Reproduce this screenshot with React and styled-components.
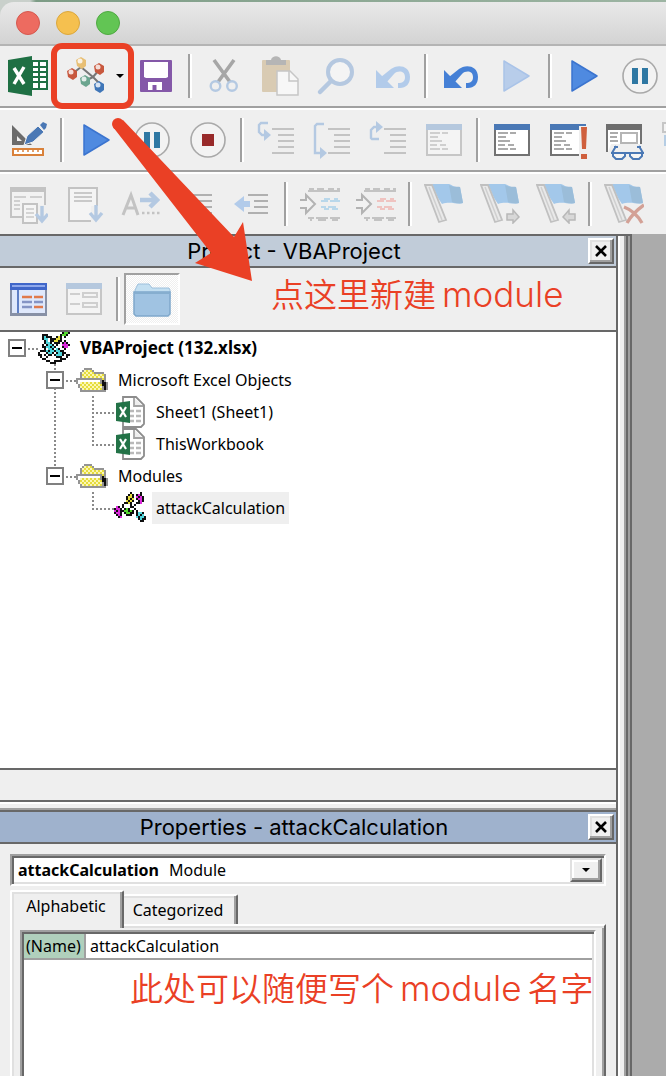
import React from "react";
import styled, { createGlobalStyle, css } from "styled-components";

const face = "#efefef";
const dark = "#686868";
const mid = "#a0a0a0";
const soft = "#e0e0e0";
const red = "#ea4025";

const GlobalStyle = createGlobalStyle`
  *, *::before, *::after { box-sizing: border-box; }
  body { margin: 0; font-family: "Noto Sans", "Noto Sans CJK SC", sans-serif; font-size: 16px; color: #000; }
  button, select { font: inherit; color: inherit; }
  ul { list-style: none; margin: 0; padding: 0; }
`;

const Window = styled.div`
  position: relative;
  display: flex;
  flex-direction: column;
  min-height: 100vh;
  overflow: hidden;
  background: ${face};
`;
const Desktop = styled.div`
  padding-top: 2px;
  background: linear-gradient(90deg, #c9d0cb 0, #c9d0cb 30px, #7d9c86 36px, #9db5a3 100%);
`;
const TitleBar = styled.header`
  display: flex;
  align-items: center;
  gap: 16px;
  height: 44px;
  padding: 0 16px;
  border-radius: 14px 0 0 0;
  border-bottom: 2px solid #b4b4b4;
  background: linear-gradient(#e9e9e9, #d3d3d3);
`;
const Light = styled.button`
  width: 24px;
  height: 24px;
  padding: 0;
  border-radius: 50%;
  border: 1px solid ${(p) => p.$edge};
  background: ${(p) => p.$fill};
`;
const Toolbar = styled.div`
  display: flex;
  align-items: center;
  height: ${(p) => (p.$last ? 60 : 64)}px;
  overflow: hidden;
  ${(p) => !p.$last && css`
    border-bottom: 2px solid #fff;
    box-shadow: inset 0 -2px ${mid};
    padding-bottom: 2px;
  `}
`;
const ToolButton = styled.button`
  flex: none;
  display: flex;
  align-items: center;
  justify-content: ${(p) => (p.$menu ? "space-between" : "center")};
  width: ${(p) => (p.$menu ? 72 : 56)}px;
  height: 52px;
  padding: ${(p) => (p.$menu ? "0 4px 0 10px" : "0")};
  border: 0;
  background: none;
  ${(p) => p.$pressed && css`
    border: 2px solid #fff;
    border-top-color: ${mid};
    border-left-color: ${mid};
    background: repeating-conic-gradient(#fff 0 25%, #efefef 0 50%) 0 0 / 2px 2px;
  `}
`;
const Divider = styled.span`
  flex: none;
  width: 4px;
  height: 44px;
  margin: 0 4px;
  border-left: 2px solid ${mid};
  border-right: 2px solid #fff;
`;
const Caret = styled.span`
  border: 4px solid transparent;
  border-top-color: #000;
  border-bottom: 0;
`;

const Workspace = styled.div`
  flex: 1;
  display: flex;
`;
const Dock = styled.div`
  flex: 1;
  min-width: 0;
  display: flex;
  flex-direction: column;
  border-top: 2px solid ${dark};
  border-right: 2px solid ${dark};
`;
const Splitter = styled.div`
  width: 14px;
  border-top: 2px solid ${dark};
  background: linear-gradient(90deg, #fff 2px, ${face} 2px 6px, ${mid} 6px 8px, ${dark} 8px 10px, ${mid} 10px 12px, ${dark} 12px);
`;
const CodeArea = styled.main`
  width: 34px;
  background: #ababab;
`;
const PanelTitle = styled.div`
  display: flex;
  align-items: center;
  height: 32px;
  padding-right: 2px;
  border-bottom: 2px solid ${dark};
  background: ${(p) => (p.$active ? "#9fb2cd" : "#c1ccd9")};
`;
const PanelHeading = styled.h2`
  flex: 1;
  margin: 0;
  text-align: center;
  font: 400 22px/28px Inter, sans-serif;
`;
const CloseButton = styled.button`
  display: flex;
  align-items: center;
  justify-content: center;
  width: 26px;
  height: 26px;
  padding: 0;
  border: 2px solid ${dark};
  border-top-color: #fff;
  border-left-color: #fff;
  background: ${face};
  box-shadow: inset -2px -2px ${mid}, inset 2px 2px ${soft};
`;
const PanelTools = styled.div`
  display: flex;
  align-items: center;
  height: 64px;
  padding-bottom: 2px;
  box-shadow: inset 0 -2px ${dark};
`;
const Tree = styled.ul`
  min-height: 436px;
  background: #fff;
`;
const PanelFoot = styled.div`
  height: 42px;
  border-top: 2px solid ${dark};
  background: linear-gradient(${face} 30px, ${dark} 30px 32px, #fff 32px 34px, ${face} 34px 38px, ${mid} 38px);
`;
const TreeRow = styled.div`
  display: flex;
  align-items: center;
  height: 32px;
  padding-left: 8px;
`;
const dotsV = "repeating-linear-gradient(#8a8a8a 0 2px, transparent 2px 4px)";
const dotsH = "repeating-linear-gradient(90deg, #8a8a8a 0 2px, transparent 2px 4px)";
const Guide = styled.span`
  width: ${(p) => (p.$end ? 30 : 38)}px;
  height: 32px;
  display: flex;
  align-items: center;
  background-repeat: no-repeat;
  background-image: ${dotsV}, ${dotsH};
  background-position: 8px 0, 8px 16px;
  background-size: ${(p) => (p.$v ? `2px ${p.$v}px` : "0 0")}, ${(p) => (p.$h ? "22px 2px" : "0 0")};
`;
const Toggle = styled.button`
  width: 18px;
  height: 18px;
  padding: 0 2px;
  border: 2px solid #808080;
  background: #fff;
  display: flex;
  align-items: center;
  &::before { content: ""; flex: 1; height: 2px; background: #000; }
`;
const TreeLabel = styled.span`
  margin-left: 6px;
  padding: 0 4px;
  line-height: 32px;
  white-space: nowrap;
  font-weight: ${(p) => (p.$bold ? 700 : 400)};
  font-size: ${(p) => (p.$bold ? 17 : 16)}px;
  background: ${(p) => (p.$selected ? face : "none")};
`;

const Properties = styled.section`
  flex: 1;
  display: flex;
  flex-direction: column;
  border-top: 2px solid ${dark};
`;
const PropertiesBody = styled.div`
  flex: 1;
  display: flex;
  flex-direction: column;
  padding: 10px 10px 0;
`;
const Combo = styled.div`
  display: flex;
  align-items: center;
  height: 32px;
  padding: 2px;
  border: 2px solid #fff;
  border-top-color: ${mid};
  border-left-color: ${mid};
  background: #fff;
  box-shadow: inset 2px 2px ${dark}, inset -2px -2px ${soft};
`;
const ComboLabel = styled.label`
  padding: 0 6px 0 4px;
  font-weight: 700;
`;
const ComboSelect = styled.select`
  flex: 1;
  height: 24px;
  padding: 0 4px;
  border: 0;
  appearance: none;
  background: none;
`;
const ComboArrow = styled.span`
  display: flex;
  align-items: center;
  justify-content: center;
  width: 32px;
  height: 24px;
  border: 2px solid ${dark};
  border-top-color: ${soft};
  border-left-color: ${soft};
  background: ${face};
  box-shadow: inset -2px -2px ${mid}, inset 2px 2px #fff;
`;
const TabStrip = styled.div`
  display: flex;
  align-items: flex-end;
  height: 34px;
  margin-top: 4px;
`;
const Tab = styled.button`
  position: relative;
  z-index: ${(p) => (p.$active ? 1 : 0)};
  width: 114px;
  height: ${(p) => (p.$active ? 38 : 30)}px;
  margin-bottom: ${(p) => (p.$active ? -4 : 0)}px;
  padding: 0 ${(p) => (p.$active ? 2 : 4)}px ${(p) => (p.$active ? 8 : 0)}px 0;
  border: 0 solid #fff;
  border-top-width: 2px;
  border-left-width: ${(p) => (p.$active ? 2 : 0)}px;
  border-right: 2px solid ${dark};
  border-radius: 2px 2px 0 0;
  background: ${face};
  box-shadow: inset -2px 0 ${mid}, inset ${(p) => (p.$active ? 2 : 0)}px 2px ${soft};
`;
const TabPage = styled.div`
  flex: 1;
  display: flex;
  padding: 4px 8px 0;
  border: 2px solid #fff;
  border-right-color: ${dark};
  border-bottom: 0;
  box-shadow: inset 2px 2px ${soft}, inset -2px 0 ${mid};
`;
const Sheet = styled.div`
  flex: 1;
  padding: 2px 2px 0;
  border: 2px solid ${mid};
  border-right-color: #fff;
  border-bottom: 0;
  background: #fff;
  box-shadow: inset 2px 2px ${dark}, inset -2px 0 ${soft};
`;
const PropTable = styled.table`
  width: 100%;
  border-spacing: 0;
  th, td { height: 26px; padding: 0 2px; line-height: 24px; text-align: left; font-weight: 400; border-bottom: 2px solid ${mid}; }
  th { width: 62px; background: #b0d0bc; border-right: 2px solid ${mid}; white-space: nowrap; }
  td { padding: 0 4px; }
`;

const Overlay = styled.svg`
  position: absolute;
  left: 0;
  top: 0;
  pointer-events: none;
`;
const Note = styled.p`
  position: absolute;
  left: ${(p) => p.$x}px;
  top: ${(p) => p.$y}px;
  display: flex;
  align-items: baseline;
  gap: 6px;
  margin: 0;
  color: ${red};
  white-space: nowrap;
  line-height: 48px;
  font-size: 33px;
  font-weight: 350;
  font-family: "Noto Sans CJK SC", sans-serif;
`;
const NoteLatin = styled.span`
  font: 300 35px/48px Inter, sans-serif;
`;

const Icon = ({ children, w = 40, h = 40 }) => (
  <svg width={w} height={h} viewBox={`0 0 ${w} ${h}`} fill="none" aria-hidden="true">{children}</svg>
);

const ExcelMark = () => (
  <Icon>
    <path d="M23 4H40V34H23Z" fill="#1f7044" />
    <path d="M25 6H38V32H25Z" fill="#fff" />
    <path d="M31 5V33M25 11H38M25 16H38M25 21H38M25 26H38" stroke="#1f7044" strokeWidth="2" />
    <path d="M0 4L24 0V40L0 36Z" fill="#1f7044" />
    <path d="M6 12L16 28M16 11L6 28" stroke="#fff" strokeWidth="3.4" />
  </Icon>
);
const Ball = ({ x, y, c }) => (
  <g>
    <path d={`M${x - 5} ${y - 3}L${x} ${y - 6}L${x + 5} ${y - 3}V${y + 3}L${x + 1} ${y + 6}L${x - 4} ${y + 3}Z`} fill={c} />
    <ellipse cx={x - 1} cy={y - 2} rx="2.5" ry="2.5" fill="#fff" opacity=".8" />
  </g>
);
const ModuleMark = () => (
  <Icon>
    <path d="M6 18L15 11L27 21L33 14M19 25L27 21L34 28" stroke="#777" strokeWidth="2" />
    <Ball x={15} y={7} c="#e8bf74" />
    <Ball x={6} y={18} c="#c8583e" />
    <Ball x={33} y={13} c="#c8583e" />
    <Ball x={19} y={25} c="#6ba58f" />
    <Ball x={33} y={31} c="#3f76b8" />
  </Icon>
);
const SaveMark = () => (
  <Icon>
    <rect x="4" y="4" width="32" height="32" rx="1" fill="#8458a8" />
    <path d="M8 6H32V21L30 22H10L8 21Z" fill="#fff" />
    <path d="M12 26H26V34H20.500V29H16.500V34H12Z" fill="#fff" />
  </Icon>
);
const CutMark = () => (
  <Icon>
    <path d="M10 4L26 26M30 4L14 26" stroke="#a6a6a6" strokeWidth="3.600" />
    <circle cx="11.500" cy="30" r="4.800" stroke="#b4c9e2" strokeWidth="2.400" />
    <circle cx="28" cy="30" r="4.800" stroke="#b4c9e2" strokeWidth="2.400" />
  </Icon>
);
const PasteMark = () => (
  <Icon>
    <rect x="2" y="4" width="28" height="32" rx="1" fill="#d9cbb3" />
    <path d="M6 9V4H11C12 -1 20 -1 21 4H26V9Z" fill="#b5b5b5" />
    <path d="M17 15H30L38 23V39H17Z" fill="#f7f7f7" stroke="#c6c6c6" strokeWidth="1.500" />
    <path d="M29 15V25H38" stroke="#c6c6c6" strokeWidth="1.500" />
  </Icon>
);
const FindMark = () => (
  <Icon>
    <circle cx="24" cy="16" r="12" fill="#f4f4f4" stroke="#b5c8e0" strokeWidth="4" />
    <path d="M15 25L4 36" stroke="#b5c8e0" strokeWidth="4.500" strokeLinecap="round" />
  </Icon>
);
const UndoMark = ({ on }) => (
  <Icon>
    <g fill={on ? "#4580d6" : "#b2cbea"}>
      <path d="M4 14V32H22Z" />
      <path d="M9 21L19 13C25 8 38 9 38 21C38 28 34 32 28 32H26V27C31 27 33 25 33 21C33 15 26 14 22 18L14 27Z" />
    </g>
  </Icon>
);
const PlayMark = ({ off }) => (
  <Icon><path d="M8 5V35L33 20Z" fill={off ? "#b8cdea" : "#4f8ae0"} stroke={off ? "#a9c3e8" : "#3b74cf"} strokeWidth="1.500" strokeLinejoin="round" /></Icon>
);
const Ring = () => <circle cx="20" cy="20" r="17" fill="#f3f3f3" stroke="#a9a9a9" strokeWidth="1.600" />;
const PauseMark = () => (
  <Icon><Ring /><path d="M12 12H18V28H12ZM22 12H28V28H22Z" fill="#2f78a3" /></Icon>
);
const StopMark = () => (
  <Icon><Ring /><rect x="14" y="14" width="12" height="12" fill="#982a2a" /></Icon>
);
const DesignMark = () => (
  <Icon>
    <path d="M4 5L24 25H4ZM9 16V21H14Z" fill="#6b6b6b" fillRule="evenodd" />
    <path d="M16 25L19 16L30 6L36 12L25 22Z" fill="#4a78b5" stroke={face} strokeWidth="1" />
    <path d="M32 5L35 2L39 4L38 8L36 10Z" fill="#4a78b5" />
    <path d="M5 29H35V35H5Z" fill="#fff" stroke="#d9813a" strokeWidth="2" />
    <path d="M10 29V32M15 29V32M20 29V32M25 29V32M30 29V32" stroke="#d9813a" strokeWidth="1.500" />
  </Icon>
);
const StepMark = ({ d, head }) => (
  <Icon>
    <path d="M16 9H38M22 15H38M22 21H38M22 27H38M16 33H38" stroke="#c3c3c3" strokeWidth="2" />
    <path d={d} stroke="#b4c9e2" strokeWidth="2.400" />
    <path d={head} fill="#b4c9e2" />
  </Icon>
);
const PaneMark = ({ head = "#4a78b5", edge = "#727272", text = "#ababab", off, children }) => (
  <Icon>
    <path d="M3 5H37V35H3Z" fill={off ? "#f4f4f4" : "#fff"} stroke={off ? "#c6c6c6" : edge} strokeWidth="2" />
    <path d="M2 4H38V10H2Z" fill={off ? "#b5c8de" : head} />
    {!children && <PaneText text={off ? "#cfcfcf" : text} />}
    {children}
  </Icon>
);
const PaneText = ({ text = "#ababab" }) => (
  <path d="M6 13H16M18 13H24M6 17H14M6 21H18M6 25H13M16 25H22M6 29H16M18 29H24" stroke={text} strokeWidth="1.800" />
);
const AlertPane = () => (
  <PaneMark>
    <PaneText />
    <path d="M31 6H40V40H31Z" fill={face} />
    <path d="M33 7H39L38 29H34ZM33 34H39V39H33Z" fill="#cf5f3d" />
  </PaneMark>
);
const WatchPane = () => (
  <PaneMark head="#6d6d6d">
    <path d="M6 13H14M6 17H13M6 21H14" stroke="#ababab" strokeWidth="1.800" />
    <path d="M17 13H33V23H17Z" stroke="#b5b5b5" strokeWidth="2" />
    <path d="M4 32L7 24H36V24H40V40H2V32Z" fill={face} />
    <path d="M3 24V32M37 20V24" stroke="#727272" strokeWidth="2" />
    <path d="M7 33H40M12 26L8 33M35 26L39 33M10 27H14M33 27H37" stroke="#4a78b5" strokeWidth="2" />
    <path d="M9 33H21V36L18 39H12L9 36ZM26 33H38V36L35 39H29L26 36Z" fill="#f5f5f5" stroke="#4a78b5" strokeWidth="2" />
  </PaneMark>
);
const StackMark = () => (
  <Icon><path d="M3 3H16V12H3Z" fill="#f4f4f4" stroke="#c6c6c6" strokeWidth="2" /><path d="M4 15H14V26H4Z" fill="#b5cde4" /></Icon>
);
const DownArrow = ({ x, y }) => (
  <path d={`M${x} ${y}V${y + 15}M${x - 6} ${y + 8}L${x} ${y + 15}L${x + 6} ${y + 8}`} stroke="#b4c9e2" strokeWidth="3.400" />
);
const ListMark = () => (
  <Icon>
    <path d="M3 4H37V33H3Z" fill="#f2f2f2" stroke="#c3c3c3" strokeWidth="2" />
    <path d="M2 3H38V8H2Z" fill="#c3c3c3" />
    <path d="M6 13H18M22 13H34M6 17H12M6 21H12M6 25H12" stroke="#cfcfcf" strokeWidth="1.800" />
    <path d="M15 20H29V39H15Z" fill="#f5f5f5" stroke="#c3c3c3" strokeWidth="2" />
    <path d="M18 25H26M18 29H26M18 33H26" stroke="#c9c9c9" strokeWidth="1.500" />
    <path d="M30 21H40V40H30Z" fill={face} />
    <DownArrow x={34} y={22} />
  </Icon>
);
const PageMark = () => (
  <Icon>
    <path d="M5 4H33V37H5Z" fill="#f4f4f4" stroke="#c3c3c3" strokeWidth="2" />
    <path d="M10 9H28M10 13H28M10 17H28" stroke="#c9c9c9" strokeWidth="1.800" />
    <path d="M27 22H40V40H27Z" fill={face} />
    <DownArrow x={32} y={21} />
  </Icon>
);
const WordMark = () => (
  <Icon>
    <path d="M3 31L11 11L18 31M6 24H16" stroke="#c3c3c3" strokeWidth="3" />
    <path d="M20 16H36M30 9L37 16L30 23" stroke="#b4c9e2" strokeWidth="4.500" />
    <path d="M22 29H40" stroke="#c3c3c3" strokeWidth="2.500" strokeDasharray="2.500 2.500" />
  </Icon>
);
const IndentMark = ({ out }) => (
  <Icon>
    <path d="M16 11H36M22 17H36M22 23H36M16 29H36" stroke="#b0b0b0" strokeWidth="2" />
    <path d={out ? "M2 20L12 12V17H18V23H12V28Z" : "M18 20L8 12V17H2V23H8V28Z"} fill="#b2cbea" />
  </Icon>
);
const CommentMark = ({ c }) => (
  <Icon>
    <path d="M8 7H40M9 5H14M17 5H24M28 5H34M37 5H40" stroke="#c3c3c3" strokeWidth="2" />
    <path d="M8 34H14M16 34H28M30 34H40M10 36H12M18 36H26M32 36H38" stroke="#c3c3c3" strokeWidth="2" />
    <path d="M21 17H28M30 17H40M24 15H30M34 15H38M21 23H26M28 23H36M24 25H29M32 25H38" stroke={c} strokeWidth="1.800" />
    <path d="M0 16H6V11L15 20L6 29V24H0" fill="#f2f2f2" stroke="#b3b3b3" strokeWidth="2" />
  </Icon>
);
const FlagMark = ({ children }) => (
  <Icon>
    <path d="M8 0H25C28 1 31 4 36 3L39 19C33 21 27 17 18 20L14 14Z" fill="#a3c8ea" />
    <path d="M25 1C30 4 33 2 36 3L39 19C35 20 31 19 28 18Z" fill="#9bbdd9" />
    <path d="M1 1H8L22 36L15 38Z" fill="#e9e9e9" stroke="#c0c0c0" strokeWidth="1.800" />
    <path d="M5 3L18 36" stroke="#cfcfcf" strokeWidth="1.500" />
    {children}
  </Icon>
);
const NextFlag = () => <FlagMark><path d="M27 30H33V26L39 33L33 39V36H27Z" fill="#d8d8d8" stroke="#b8b8b8" strokeWidth="1.500" /></FlagMark>;
const PrevFlag = () => <FlagMark><path d="M39 30H33V26L27 33L33 39V36H39Z" fill="#d8d8d8" stroke="#b8b8b8" strokeWidth="1.500" /></FlagMark>;
const ClearFlag = () => <FlagMark><path d="M20 23C28 26 34 32 38 39M40 21C33 26 27 32 23 39" stroke="#d3a196" strokeWidth="3.400" /></FlagMark>;

const ViewCodeMark = () => (
  <Icon>
    <path d="M2 4H39V37H2Z" fill="#8790a5" />
    <path d="M2 4H39V11H2Z" fill="#3f66c9" />
    <path d="M4 6H37V8H4Z" fill="#8ea8ec" />
    <path d="M4 11H37V34H4Z" fill="#dfe8fb" />
    <path d="M10 11V34" stroke="#5f7fc4" strokeWidth="2" />
    <path d="M14 18H24M26 18H35M26 28H35" stroke="#e07a4c" strokeWidth="2.500" />
    <path d="M14 23H24M26 23H35M14 28H24" stroke="#8594c4" strokeWidth="2.500" />
  </Icon>
);
const ViewObjectMark = () => (
  <PaneMark off>
    <path d="M6 15H16M6 25H16" stroke="#cfcfcf" strokeWidth="2" />
    <path d="M19 14H33V18H19ZM19 24H33V28H19Z" stroke="#cfcfcf" strokeWidth="2" />
  </PaneMark>
);
const FolderMark = () => (
  <Icon>
    <path d="M4 9L6 5H17L20 9H37L38 11V20H3V11Z" fill="#c3dff1" stroke="#9ec0dc" />
    <path d="M2 13H38V35L36 37H4L2 35Z" fill="#a0c3e2" stroke="#7fa8cb" strokeWidth="1.500" />
    <path d="M3 14H37" stroke="#86aecf" strokeWidth="2" />
  </Icon>
);
const CloseMark = () => (
  <Icon w={12} h={12}><path d="M1 1L11 11M11 1L1 11" stroke="#000" strokeWidth="2.600" /></Icon>
);

const palette = {
  K: "#101010", G: "#55d82f", Y: "#e6dc3c", y: "#fbf7b4", C: "#4fd6dc", M: "#dc2bdc", W: "#fff", g: "#949494",
};
// Sixteen-colour tree icons, one character per 2px cell.
const CellIcon = ({ cells }) => (
  <svg width="32" height="32" viewBox="0 0 16 16" shapeRendering="crispEdges" aria-hidden="true">
    {cells.flatMap((row, y) => [...row].map((c, x) => palette[c] && (
      <rect key={`${x}-${y}`} x={x} y={y} width="1" height="1" fill={palette[c]} />
    )))}
  </svg>
);
const projectCells = [
  "............KGGK",
  "..KKK......KGGK.",
  "..KCKKK..KYK.K..",
  "..KCCWKKKYYK....",
  "...KCWKKYYKK.K..",
  "...KCCKWKKK.KMK.",
  "..KWKCCKWK..MMMK",
  "..KKCCKCK...KMM.",
  "...KWCCKWCK..K..",
  ".KKKCKCCKCCKK...",
  "K.WWKCCKWKCCKK..",
  "KKWKWKKWKCCCKWKK",
  ".KWWKWWWWKKKWWK.",
  "..KKWWWWWWWKKK..",
  "....KKWWKKKK....",
  "......KKK.......",
];
const folderCells = [
  "", "",
  "....gggg........",
  "...gyYyYg.......",
  "..gyYyYyYggggg..",
  "..gYyYyYyYyYyYg.",
  "..gyYyYyYyYyYyg.",
  "gggggggggggggYg.",
  "gWWWWWWWWWWWgKg.",
  "gWyYyYyYyYyYgKKg",
  ".gYyYyYyYyYyYKKg",
  ".gyYyYyYyYyYygKg",
  "..gyYyYyYyYyYgKg",
  "..ggggggggggggg.",
];
const moduleCells = [
  "........K....K..",
  ".......KYK.KMK..",
  "......KYYK.MKMK.",
  "......KYKY.KMMK.",
  "......YKYK..KMK.",
  ".....KKYK..KKM..",
  "....K...K.K.....",
  ".MK.K...KK......",
  "KMMK.KGK..K.....",
  "MKMKKGGKGK.K....",
  "KMMK.KGGKK.KCCK.",
  ".KMK..KKK..KCKC.",
  "..KM.......CKCCK",
  "............KCKK",
  ".............KK.",
];
const SheetMark = () => (
  <Icon w={32} h={32}>
    <path d="M9 1H22L30 9V28L27 31H9Z" fill="#fff" stroke="#8c8c8c" strokeWidth="1.800" />
    <path d="M20 2V10H29" fill="#eee" stroke="#a4a4a4" strokeWidth="1.800" />
    <path d="M16 15H20M22 15H27M16 20H20M22 20H27M16 25H20M22 25H27" stroke="#b9b9b9" strokeWidth="2.500" />
    <path d="M2 7L16 5V27L2 25Z" fill="#237247" />
    <path d="M6 11L12 21M12 11L6 21" stroke="#fff" strokeWidth="2.200" />
  </Icon>
);

const rows = [
  [["Excel", <ExcelMark />], ["Insert module", <ModuleMark />, true], ["Save", <SaveMark />], null,
    ["Cut", <CutMark />], ["Paste", <PasteMark />], ["Find", <FindMark />], ["Undo", <UndoMark />], null,
    ["Redo", <UndoMark on />], ["Repeat", <PlayMark off />], null, ["Run", <PlayMark />], ["Break", <PauseMark />]],
  [["Design mode", <DesignMark />], null, ["Run macro", <PlayMark />], ["Pause", <PauseMark />], ["Stop", <StopMark />], null,
    ["Step into", <StepMark d="M12 3H5L3 5V12L6 15H9" head="M8 9L15 15L8 21Z" />],
    ["Step over", <StepMark d="M12 4H5L3 6V33H9" head="M8 27L15 33L8 39Z" />],
    ["Step out", <StepMark d="M11 19H4L3 18V10L6 7H9" head="M8 1L15 7L8 13Z" />],
    ["Locals", <PaneMark off />], null, ["Immediate", <PaneMark />], ["Breakpoints", <AlertPane />], ["Watch", <WatchPane />], ["Call stack", <StackMark />]],
  [["List properties", <ListMark />], ["Quick info", <PageMark />], ["Complete word", <WordMark />], ["Indent", <IndentMark />], ["Outdent", <IndentMark out />], null,
    ["Comment block", <CommentMark c="#b9d7ea" />], ["Uncomment block", <CommentMark c="#efc3c0" />], null,
    ["Bookmark", <FlagMark />], ["Next bookmark", <NextFlag />], ["Previous bookmark", <PrevFlag />], null, ["Clear bookmarks", <ClearFlag />]],
];

const nodes = [
  { text: "VBAProject (132.xlsx)", icon: <CellIcon cells={projectCells} />, level: 0, bold: true },
  { text: "Microsoft Excel Objects", icon: <CellIcon cells={folderCells} />, level: 1, v: 32 },
  { text: "Sheet1 (Sheet1)", icon: <SheetMark />, level: 2, v: 32, line: 32 },
  { text: "ThisWorkbook", icon: <SheetMark />, level: 2, v: 18, line: 32 },
  { text: "Modules", icon: <CellIcon cells={folderCells} />, level: 1, v: 16 },
  { text: "attackCalculation", icon: <CellIcon cells={moduleCells} />, level: 2, v: 18, selected: true },
];

export default function App() {
  return (
    <Window>
      <GlobalStyle />
      <Desktop>
        <TitleBar>
          <Light aria-label="Close window" $fill="#ed6b60" $edge="#d5584e" />
          <Light aria-label="Minimize window" $fill="#f5c04f" $edge="#dba73c" />
          <Light aria-label="Zoom window" $fill="#62c554" $edge="#4fa942" />
        </TitleBar>
      </Desktop>
      {rows.map((items, r) => (
        <Toolbar key={r} role="toolbar" $last={r === 2}>
          {items.map((it, i) => it
            ? <ToolButton key={i} aria-label={it[0]} $menu={it[2]}>{it[1]}{it[2] && <Caret />}</ToolButton>
            : <Divider key={i} />)}
        </Toolbar>
      ))}
      <Workspace>
        <Dock>
          <PanelTitle>
            <PanelHeading>Project - VBAProject</PanelHeading>
            <CloseButton aria-label="Close project"><CloseMark /></CloseButton>
          </PanelTitle>
          <PanelTools>
            <ToolButton aria-label="View code"><ViewCodeMark /></ToolButton>
            <ToolButton aria-label="View object"><ViewObjectMark /></ToolButton>
            <Divider />
            <ToolButton aria-label="Toggle folders" $pressed><FolderMark /></ToolButton>
          </PanelTools>
          <Tree>
            {nodes.map((n) => (
              <li key={n.text}>
                <TreeRow>
                  {n.level > 0 && <Guide />}
                  {n.level > 1 && <Guide $v={n.line} />}
                  <Guide $end $h $v={n.v}>
                    {n.level < 2 && <Toggle aria-label={`Collapse ${n.text}`} />}
                  </Guide>
                  {n.icon}
                  <TreeLabel $bold={n.bold} $selected={n.selected}>{n.text}</TreeLabel>
                </TreeRow>
              </li>
            ))}
          </Tree>
          <PanelFoot />
          <Properties>
            <PanelTitle $active>
              <PanelHeading>Properties - attackCalculation</PanelHeading>
              <CloseButton aria-label="Close properties"><CloseMark /></CloseButton>
            </PanelTitle>
            <PropertiesBody>
              <Combo>
                <ComboLabel htmlFor="object">attackCalculation</ComboLabel>
                <ComboSelect id="object"><option>Module</option></ComboSelect>
                <ComboArrow><Caret /></ComboArrow>
              </Combo>
              <TabStrip role="tablist">
                <Tab role="tab" aria-selected="true" $active>Alphabetic</Tab>
                <Tab role="tab" aria-selected="false">Categorized</Tab>
              </TabStrip>
              <TabPage>
                <Sheet>
                  <PropTable>
                    <tbody><tr><th scope="row">(Name)</th><td>attackCalculation</td></tr></tbody>
                  </PropTable>
                </Sheet>
              </TabPage>
            </PropertiesBody>
          </Properties>
        </Dock>
        <Splitter />
        <CodeArea />
      </Workspace>
      <Overlay width="260" height="290" aria-hidden="true">
        <rect x="54" y="46" width="77" height="60" rx="8" fill="none" stroke={red} strokeWidth="6" />
        <circle cx="118" cy="124" r="6" fill={red} />
        <path d="M113 127L211 253L195 263L252 281L243 222L234 237L123 120Z" fill={red} />
      </Overlay>
      <Note $x={271} $y={269}>点这里新建<NoteLatin>module</NoteLatin></Note>
      <Note $x={130} $y={963}>此处可以随便写个<NoteLatin>module</NoteLatin>名字</Note>
    </Window>
  );
}
